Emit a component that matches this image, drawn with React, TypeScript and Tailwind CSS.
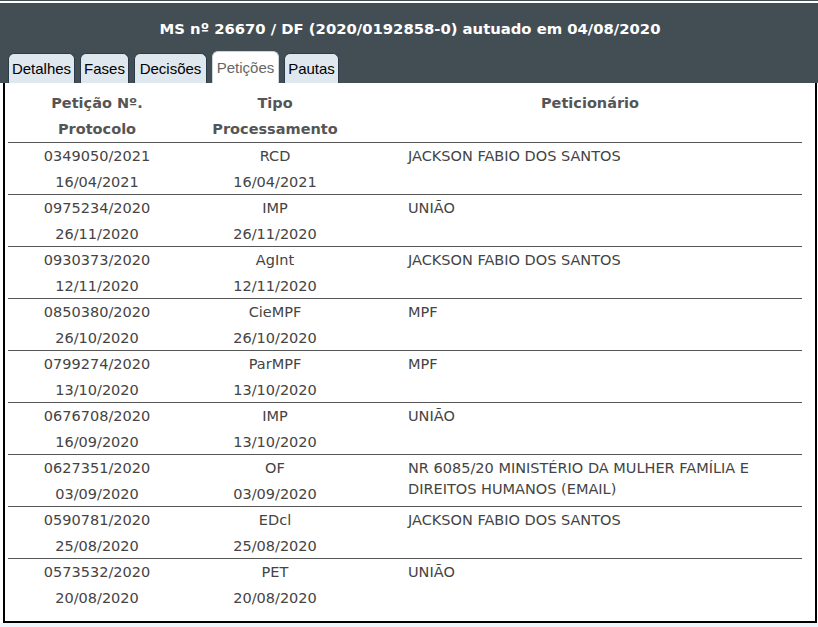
import React from "react";

const TITLE = "MS nº 26670 / DF (2020/0192858-0) autuado em 04/08/2020";

const TABS = [
  { label: "Detalhes", w: "w-[67px]" },
  { label: "Fases", w: "w-[49px]" },
  { label: "Decisões", w: "w-[73px]" },
  { label: "Petições", w: "w-[67px]", active: true },
  { label: "Pautas", w: "w-[55px]" },
];

const ROWS = [
  ["0349050/2021", "16/04/2021", "RCD", "16/04/2021", "JACKSON FABIO DOS SANTOS"],
  ["0975234/2020", "26/11/2020", "IMP", "26/11/2020", "UNIÃO"],
  ["0930373/2020", "12/11/2020", "AgInt", "12/11/2020", "JACKSON FABIO DOS SANTOS"],
  ["0850380/2020", "26/10/2020", "CieMPF", "26/10/2020", "MPF"],
  ["0799274/2020", "13/10/2020", "ParMPF", "13/10/2020", "MPF"],
  ["0676708/2020", "16/09/2020", "IMP", "13/10/2020", "UNIÃO"],
  [
    "0627351/2020",
    "03/09/2020",
    "OF",
    "03/09/2020",
    "NR 6085/20 MINISTÉRIO DA MULHER FAMÍLIA E DIREITOS HUMANOS (EMAIL)",
  ],
  ["0590781/2020", "25/08/2020", "EDcl", "25/08/2020", "JACKSON FABIO DOS SANTOS"],
  ["0573532/2020", "20/08/2020", "PET", "20/08/2020", "UNIÃO"],
];

function Tabs() {
  return (
    <div className="flex items-end gap-[5px] pl-[8px] h-[33px]">
      {TABS.map((t) =>
        t.active ? (
          <div
            key={t.label}
            className={`${t.w} h-[32px] bg-white rounded-t-[6px] border border-b-0 border-[#c9d3dc] text-[#666] flex items-center justify-center pt-[1px]`}
          >
            {t.label}
          </div>
        ) : (
          <div
            key={t.label}
            className={`${t.w} h-[30px] bg-[#dfe7ef] rounded-t-[6px] border border-b-0 border-[#2a3a48] text-black flex items-center justify-center pt-[1px]`}
          >
            {t.label}
          </div>
        ),
      )}
    </div>
  );
}

export default function App() {
  return (
    <div
      className="w-[818px] h-[627px] bg-white overflow-hidden"
      style={{ fontFamily: "'DejaVu Sans', Verdana, sans-serif" }}
    >
      <div className="h-[1px] bg-[#434e54]" />
      <div className="h-[2px] bg-white" />
      <div className="h-[80px] bg-[#434e54] flex flex-col justify-between">
        <h1 className="text-white font-bold text-[14.8px] text-center pt-[15px] pl-[2px]">
          {TITLE}
        </h1>
        <div
          className="text-[15px]"
          style={{ fontFamily: "'Liberation Sans', Arial, sans-serif" }}
        >
          <Tabs />
        </div>
      </div>

      <div className="ml-[3px] w-[814px] h-[540px] border-l-2 border-r-2 border-b-2 border-black">
        <div className="ml-[3px] w-[794px] text-[14.5px] leading-[25.5px] text-[#444]">
          <div className="flex font-bold text-[#555] pt-[8px] border-b border-[#555]">
            <div className="w-[178px] text-center">
              <div>Petição Nº.</div>
              <div>Protocolo</div>
            </div>
            <div className="w-[178px] text-center">
              <div>Tipo</div>
              <div>Processamento</div>
            </div>
            <div className="flex-1 text-center pl-[14px]">Peticionário</div>
          </div>

          {ROWS.map((r, i) => (
            <div
              key={r[0]}
              className={`flex h-[52px] pt-[1px] ${i < ROWS.length - 1 ? "border-b border-[#555]" : ""}`}
            >
              <div className="w-[178px] text-center">
                <div>{r[0]}</div>
                <div>{r[1]}</div>
              </div>
              <div className="w-[178px] text-center">
                <div>{r[2]}</div>
                <div>{r[3]}</div>
              </div>
              <div className="flex-1 pl-[44px] pr-[30px] pt-[2px] leading-[21px]">
                {r[4]}
              </div>
            </div>
          ))}
        </div>
      </div>
      <div className="h-[5px] bg-[#eef5fb]" />
    </div>
  );
}
